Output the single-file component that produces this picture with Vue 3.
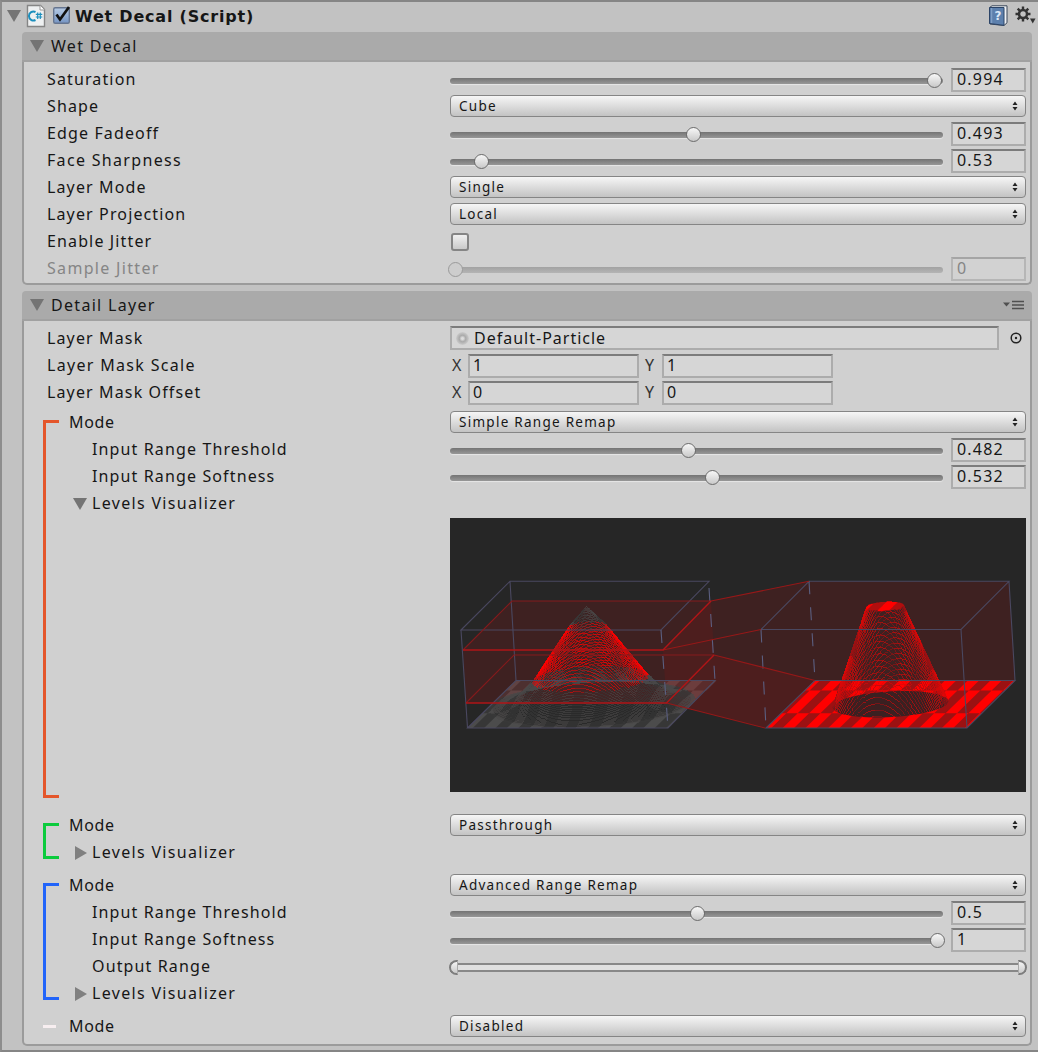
<script setup>
const wetRows = [
  { label: 'Saturation', type: 'slider', value: '0.994', pos: 98.3 },
  { label: 'Shape', type: 'select', value: 'Cube' },
  { label: 'Edge Fadeoff', type: 'slider', value: '0.493', pos: 49.3 },
  { label: 'Face Sharpness', type: 'slider', value: '0.53', pos: 6.4, wide: true },
  { label: 'Layer Mode', type: 'select', value: 'Single' },
  { label: 'Layer Projection', type: 'select', value: 'Local' },
  { label: 'Enable Jitter', type: 'check' },
  { label: 'Sample Jitter', type: 'slider', value: '0', pos: 1.2, disabled: true, wide: true },
]

const maskRows = [
  { label: 'Layer Mask', type: 'object', value: 'Default-Particle' },
  { label: 'Layer Mask Scale', type: 'vector', x: '1', y: '1', wide: true },
  { label: 'Layer Mask Offset', type: 'vector', x: '0', y: '0' },
]

const groups = [
  {
    color: 'orange',
    rows: [
      { label: 'Mode', type: 'select', value: 'Simple Range Remap' },
      { label: 'Input Range Threshold', type: 'slider', value: '0.482', pos: 48.4, indent: true },
      { label: 'Input Range Softness', type: 'slider', value: '0.532', pos: 53.3, indent: true },
      { label: 'Levels Visualizer', type: 'fold', open: true, indent: true, wide: true },
    ],
    chart: true,
  },
  {
    color: 'green',
    rows: [
      { label: 'Mode', type: 'select', value: 'Passthrough' },
      { label: 'Levels Visualizer', type: 'fold', indent: true, wide: true },
    ],
  },
  {
    color: 'blue',
    rows: [
      { label: 'Mode', type: 'select', value: 'Advanced Range Remap' },
      { label: 'Input Range Threshold', type: 'slider', value: '0.5', pos: 50.2, indent: true },
      { label: 'Input Range Softness', type: 'slider', value: '1', pos: 98.9, indent: true },
      { label: 'Output Range', type: 'range', indent: true },
      { label: 'Levels Visualizer', type: 'fold', indent: true, wide: true },
    ],
  },
  { color: 'white', rows: [{ label: 'Mode', type: 'select', value: 'Disabled' }] },
]

const sections = [
  { title: 'Wet Decal', cls: 'first', blocks: [{ rows: wetRows }] },
  { title: 'Detail Layer', cls: 'second', menu: true, blocks: [{ rows: maskRows }, ...groups] },
]

// Height field of the particle mask, projected obliquely onto the chart.
const LOW = 0.255
const HIGH = 0.8
function height(u, v) {
  const r = Math.hypot(u - 0.5, v - 0.5)
  if (r < 0.09) return 1 - 2.2 * r
  if (r < 0.28) return 0.8 - ((r - 0.09) * (0.8 - LOW)) / 0.19
  if (r < 0.5) return LOW * ((0.5 - r) / 0.22) ** 2
  return 0
}
function bright(u, v) {
  const band = v < 0.31 ? 0 : v < 0.79 ? 1 : 2
  const t = (u - 0.083) / 0.1135 + (band === 1 ? 0.5 : 0)
  return t - Math.floor(t) < 0.5
}
function project(ox, u, v, h) {
  const x = ox + u * 200.5 + v * 48.5 - h * 5.5
  const y = 210 - v * 47.5 - h * 98
  return x.toFixed(1) + ' ' + y.toFixed(1)
}
function build(ox, remap) {
  const layers = {}
  const rows = 90
  const cols = 150
  for (let j = rows; j >= 0; j--) {
    const v = j / rows
    for (let i = 0; i < cols; i++) {
      const u = i / cols
      const u2 = (i + 1) / cols
      const src = height((u + u2) / 2, v)
      const f = (s) => (remap ? Math.min(1, Math.max(0, (s - LOW) / (HIGH - LOW))) : s)
      const h = f(src)
      if (h === 0) continue
      const b = bright(u, v)
      let key
      if (remap) key = h === 1 ? (b ? 'top' : 'topDim') : b ? 'red' : 'dim'
      else if (src > LOW && src < HIGH) key = b ? 'red' : 'dim'
      else key = b ? 'grey' : 'greyDim'
      layers[key] = (layers[key] || '') + 'M' + project(ox, u, v, f(height(u, v))) + 'L' + project(ox, u2, v, f(height(u2, v)))
    }
  }
  return layers
}
function floorTiles(ox) {
  let d = ''
  const bands = [[0, 0.31, 0], [0.31, 0.79, 0.5], [0.79, 1, 0]]
  for (const [a, b, off] of bands) {
    for (let k = -2; k < 10; k++) {
      const s = Math.max(0, 0.083 + (k - off) * 0.1135)
      const e = Math.min(1, 0.083 + (k - off + 0.5) * 0.1135)
      if (e <= s) continue
      d += 'M' + [project(ox, s, a, 0), project(ox, e, a, 0), project(ox, e, b, 0), project(ox, s, b, 0)].join('L') + 'Z'
    }
  }
  return d
}
function footprint(ox, radius) {
  const pts = []
  for (let i = 0; i < 72; i++) {
    const a = (i / 72) * Math.PI * 2
    pts.push(project(ox, 0.5 + Math.cos(a) * radius, 0.5 + Math.sin(a) * radius, 0))
  }
  return 'M' + pts.join('L') + 'Z'
}
const source = build(17.5, false)
const result = build(316, true)
const sourceTiles = floorTiles(17.5)
const resultTiles = floorTiles(316)
const sourceHole = footprint(17.5, 0.48)
const resultHole = footprint(316, 0.28)
</script>

<template>
  <div class="inspector">
    <header class="head">
      <i class="tri down"></i>
      <svg class="script" width="20" height="24" viewBox="0 0 20 24">
        <path d="M1.500 1.500h13l4 4v17h-17z" fill="#eef0f1" stroke="#858585" stroke-width="1.400" />
        <path d="M14 1.500v4.500h4.500" fill="#fff" stroke="#999" />
        <path d="M9.500 8A4.500 4.500 0 1 0 9.500 16" fill="none" stroke="#1c8fbd" stroke-width="2" />
        <path d="M11.700 8.500v6.500M14.300 8.500v6.500M9.800 10.400h6.500M9.800 13h6.500" stroke="#1c8fbd" stroke-width="1.200" />
      </svg>
      <svg class="enabled" width="20" height="20" viewBox="0 0 20 20">
        <defs><linearGradient id="bluebox" x2="0" y2="1"><stop stop-color="#b7cbe4" /><stop offset="1" stop-color="#7595c4" /></linearGradient></defs>
        <rect x="1.700" y="1.700" width="15.600" height="15.600" rx="1.500" fill="url(#bluebox)" stroke="#66758f" stroke-width="1.400" />
        <path d="M4.500 8.500L8 13.500L17 1" fill="none" stroke="#111" stroke-width="2.700" />
      </svg>
      <b class="name">Wet Decal (Script)</b>
      <svg class="book" width="20" height="22" viewBox="0 0 20 22">
        <path d="M2 2.200L4 .8H19v17l-3 2.700L2 19z" fill="#f0f2f5" stroke="#3a4658" />
        <path d="M1.500 2.500h14.500v17.800L1.500 18.500z" fill="#5d80ad" stroke="#2c4467" />
        <path d="M3.700 3v15" stroke="#89a7cb" />
        <text x="10" y="14.500" text-anchor="middle" class="q">?</text>
      </svg>
      <svg class="gear" width="22" height="20" viewBox="0 0 22 20">
        <circle cx="8" cy="8" r="4" fill="none" stroke="#333" stroke-width="2.500" />
        <path d="M8 .5v3M8 12.500v3M.5 8h3M12.500 8h3M2.700 2.700l2.200 2.200M11.100 11.100l2.200 2.200M2.700 13.300l2.200-2.200M11.100 4.900l2.200-2.200" stroke="#333" stroke-width="2.400" />
        <path d="M15 12.500h5.500l-2.750 5z" fill="#333" />
      </svg>
    </header>

    <section v-for="s in sections" :key="s.title" class="section" :class="s.cls">
      <h2 class="title">
        <i class="tri down"></i><span>{{ s.title }}</span>
        <svg v-if="s.menu" class="menu" width="22" height="10" viewBox="0 0 22 10">
          <path d="M0 2.500h7L3.500 6.500z" fill="#505050" />
          <path d="M9 1.500h12M9 5h12M9 8.500h12" stroke="#505050" stroke-width="1.600" />
        </svg>
      </h2>
      <div class="body">
        <div v-for="(g, gi) in s.blocks" :key="gi" class="block" :class="g.color">
          <div v-if="g.color" class="bracket"></div>
          <div v-for="r in g.rows" :key="r.label" class="row" :class="{ indent: r.indent, disabled: r.disabled }">
            <div class="label" :class="{ wide: r.wide, tight: r.label === 'Mode' }">
              <i v-if="r.type === 'fold'" class="tri" :class="r.open ? 'down' : 'right'"></i>
              <span>{{ r.label }}</span>
            </div>
            <div class="control">
              <template v-if="r.type === 'slider'">
                <div class="slider"><div class="track"></div><i class="knob" :style="{ left: r.pos + '%' }"></i></div>
                <div class="field num">{{ r.value }}</div>
              </template>
              <div v-else-if="r.type === 'select'" class="select">
                <span>{{ r.value }}</span>
                <svg width="6" height="10" viewBox="0 0 6 10"><path d="M.5 4L3 .5L5.500 4zM.5 6h5L3 9.500z" fill="#222" /></svg>
              </div>
              <i v-else-if="r.type === 'check'" class="check"></i>
              <template v-else-if="r.type === 'object'">
                <div class="field object"><i class="dot"></i>{{ r.value }}</div>
                <svg class="picker" width="12" height="12" viewBox="0 0 12 12">
                  <circle cx="6" cy="6" r="4.800" fill="none" stroke="#222" stroke-width="1.500" /><circle cx="6" cy="6" r="1.200" fill="#222" />
                </svg>
              </template>
              <template v-else-if="r.type === 'vector'">
                <span class="axis">X</span><div class="field vec">{{ r.x }}</div>
                <span class="axis y">Y</span><div class="field vec">{{ r.y }}</div>
              </template>
              <div v-else-if="r.type === 'range'" class="minmax"><i class="end l"></i><i class="end r"></i></div>
            </div>
          </div>

          <svg v-if="g.chart" class="chart" width="576" height="274" viewBox="0 0 576 274">
            <rect width="576" height="274" fill="#262626" />
            <path d="M17.500 210L66 162.500H265L218 210z" fill="#373737" />
            <path :d="sourceTiles" fill="#4c4c4c" />
            <path :d="sourceHole" fill="#2a2a2a" />
            <path d="M13 132L62 83H261L359 63.300H559L565 162.500L517 210H315L216.500 185H16z" fill="#f00" fill-opacity=".115" />
            <path d="M213 132L261 83L264 137L365 162.500L315 210L216.500 185z" fill="#f00" fill-opacity=".08" />
            <path d="M316 210L365 162.500H565L517 210z" fill="#9c1112" />
            <path :d="resultTiles" fill="#ff0000" />
            <path :d="resultHole" fill="#3b2021" />
            <g fill="none" shape-rendering="crispEdges" stroke-width=".6">
              <path :d="source.greyDim" stroke="#383838" />
              <path :d="source.grey" stroke="#494747" />
              <path :d="source.dim" stroke="#c01010" />
              <path :d="source.red" stroke="#f00" />
              <path :d="result.dim" stroke="#9c1112" />
              <path :d="result.red" stroke="#d80808" />
            </g>
            <g fill="none" stroke-width="1.300">
              <path :d="result.topDim" stroke="#b00e0e" />
              <path :d="result.top" stroke="#f00" />
            </g>
            <g fill="none" stroke="#4a4860" stroke-width="1.100">
              <path d="M11 112L60 63.300H259L211 112zM17.500 210L66 162.500H265L218 210zM11 112L17.500 210M60 63.300L66 162.500" />
              <path d="M311 111.500L359 63.300H559L511 111.500zM316 210L365 162.500H565L517 210zM511 111.500L517 210M559 63.300L565 162.500" />
              <path d="M259 70L265 162.500M211 112L218 210M311 111.500L316 210M359 63.300L365 162.500" stroke="#5b5f80" stroke-dasharray="13 13" />
            </g>
            <g fill="none" stroke="#961818" stroke-width="1.100">
              <path d="M13 132L62 83H261M16 185L64 137H264" stroke="#851a1c" />
              <path d="M213 132L311 111.500M261 83L359 63.300M264 137L365 162.500M216.500 185L315 210" />
              <path d="M13 132H213L261 83M16 185H216.500L264 137" stroke="#b01517" stroke-width="1.400" />
            </g>
          </svg>
        </div>
      </div>
    </section>
  </div>
</template>

<style>
body { margin: 0; background: #c2c2c2; }
</style>

<style scoped>
* { box-sizing: border-box; }
.inspector {
  width: 1038px; height: 1052px; overflow: hidden; background: #c2c2c2;
  border-left: 2px solid #8d8d8d; border-top: 2px solid #858585; border-bottom: 2px solid #858585;
  color: #161616; font: 16px/27px "Noto Sans", sans-serif; letter-spacing: 1.13px;
}
.head { height: 30px; display: flex; align-items: center; padding: 0 0 2px 5px; }
.tri { flex: none; width: 0; height: 0; }
.tri.down { border: 7px solid transparent; border-top: 12px solid #747474; border-bottom: 0; }
.tri.right { border: 7px solid transparent; border-left: 12px solid #808080; border-right: 0; }
.head .tri { margin-right: 5px; }
.enabled { margin-left: 6px; }
.name { margin-left: 3px; font: bold 16px "DejaVu Sans", sans-serif; letter-spacing: .8px; flex: 1; }
.q { font: bold 12px "DejaVu Sans", sans-serif; letter-spacing: 0; fill: #dce8f8; }
.gear { margin: 0 1px 0 7px; }
.section { margin: 0 6px 0 20px; border-radius: 4px; }
.section.second { margin-top: 6px; }
.title {
  margin: 0; height: 30px; display: flex; align-items: center; padding-left: 8px; background: #aaa;
  border-radius: 4px 4px 0 0; border-bottom: 2px solid #a1a1a1; font: inherit; letter-spacing: 1.3px;
}
.title span { margin-left: 7px; flex: 1; }
.menu { margin-right: 7px; }
.body { border: 2px solid #9b9b9b; border-top: 0; border-radius: 0 0 5px 5px; background: #d0d0d0; padding: 4px 4px 0 23px; height: 223px; }
.second .body { height: 725px; }
.block { position: relative; }
.row { height: 27px; display: flex; align-items: center; }
.label { width: 403px; display: flex; align-items: center; white-space: nowrap; }
.label.wide { letter-spacing: 1.32px; }
.label.tight { letter-spacing: .65px; }
.control { width: 576px; display: flex; align-items: center; }
.disabled { color: #858585; }
.slider { position: relative; width: 493px; height: 22px; margin-right: 8px; padding-top: 9px; }
.track { height: 6px; border-radius: 3px; background: linear-gradient(#747474, #979797); box-shadow: 0 1px 1px #e6e6e6; }
.knob {
  position: absolute; top: 4.5px; width: 15px; height: 15px; margin-left: -7.5px; border-radius: 50%;
  border: 1.5px solid #6b6b6b; background: linear-gradient(#f7f7f7, #c9c9c9);
}
.disabled .track { background: linear-gradient(#a2a2a2, #b4b4b4); box-shadow: none; }
.disabled .knob { border-color: #9a9a9a; background: #cdcdcd; }
.field {
  height: 24px; border: 2px solid #acacac; border-top-color: #7c7c7c; background: #d6d6d6;
  line-height: 19px; padding-left: 4px; white-space: nowrap;
}
.num { width: 75px; letter-spacing: 1.2px; }
.disabled .field { border-color: #b6b6b6; border-top-color: #a5a5a5; background: #d2d2d2; }
.select {
  width: 576px; height: 22px; margin-bottom: 2px; display: flex; align-items: center; justify-content: space-between; padding: 0 7px 0 8px;
  border: 1.5px solid #858585; border-radius: 4px; background: linear-gradient(#f6f6f6, #c3c3c3);
  font-size: 13.5px; line-height: 18px; letter-spacing: 1.27px;
}
.check { width: 18px; height: 18px; margin-left: 1px; border: 2px solid #858585; border-radius: 3px; background: linear-gradient(#f0f0f0, #cacaca); }
.object { width: 549px; margin-bottom: 1px; display: flex; align-items: center; letter-spacing: 1px; }
.dot { width: 13px; height: 13px; margin-right: 5px; border-radius: 50%; background: radial-gradient(#ddd 10%, #aaa 35%, #d0d0d0 75%); }
.picker { margin-left: 11px; margin-bottom: 2px; }
.axis { width: 18px; padding-left: 2px; color: #333; }
.axis.y { width: 23px; padding-left: 6px; }
.vec { width: 171px; padding-left: 3px; }
.minmax { position: relative; width: 576px; height: 9px; margin-top: 2px; border: 2px solid #888; border-left: 0; border-right: 0; background: #e0e0e0; }
.end { position: absolute; top: -5px; width: 9px; height: 15px; border: 2px solid #7d7d7d; background: linear-gradient(#f4f4f4, #cacaca); }
.end.l { left: -1px; border-right: 1px solid #aaa; border-radius: 8px 0 0 8px; }
.end.r { right: -1px; border-left: 1px solid #aaa; border-radius: 0 8px 8px 0; }
.orange, .green, .blue, .white { padding-left: 22px; }
.orange .label, .green .label, .blue .label, .white .label { width: 381px; }
.indent .label { padding-left: 23px; }
.indent .label .tri.down { margin-left: -19px; margin-right: 5px; }
.indent .label .tri.right { margin-left: -17px; margin-right: 5px; }
.orange { margin-top: 3px; }
.green { margin-top: 20px; }
.blue, .white { margin-top: 6px; }
.bracket { position: absolute; left: -4px; top: 11px; width: 16px; bottom: 7px; border: 3px solid; border-right: 0; }
.orange .bracket { color: #e4562b; bottom: -6px; }
.green .bracket { color: #0bcb3d; }
.blue .bracket { color: #2164fa; }
.white .bracket { color: #f7eef0; height: 3px; bottom: auto; width: 13px; top: 12px; border: 0; border-top: 3px solid; }
.chart { display: block; margin: 1px 0 0 381px; }
</style>
